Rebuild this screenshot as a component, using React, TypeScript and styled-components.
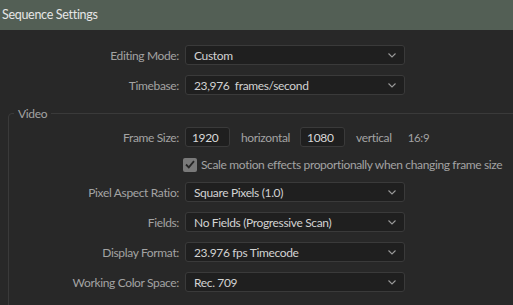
import React from "react";
import styled, { createGlobalStyle } from "styled-components";

const GlobalStyle = createGlobalStyle`
  html, body {
    margin: 0;
    padding: 0;
    background: #282828;
    overflow: hidden;
  }
  body {
    font-family: Lato, "Noto Sans", sans-serif;
    width: 513px;
    height: 305px;
  }
`;

const Window = styled.div`
  width: 513px;
  height: 305px;
  background: #282828;
  overflow: hidden;
`;

const TitleBar = styled.div`
  height: 30px;
  background: #535f55;
  display: flex;
  align-items: center;
  padding-left: 2px;
  color: #e6e6e6;
  font-size: 12.5px;
  letter-spacing: -0.3px;
  padding-bottom: 1px;
  box-sizing: border-box;
`;

const Grid = styled.div`
  display: grid;
  grid-template-columns: 179px 220px;
  column-gap: 6px;
  row-gap: 10px;
  align-items: center;
`;

const TopGrid = styled(Grid)`
  padding-top: 15px;
`;

const Text = styled.div`
  font-size: 12px;
  letter-spacing: -0.35px;
`;

const Label = styled(Text)`
  text-align: right;
  color: #a3a3a3;
`;

const SelectBox = styled(Text)`
  height: 20px;
  box-sizing: border-box;
  border: 1px solid #3a3a3a;
  border-radius: 3px;
  background: #1f1f1f;
  display: flex;
  align-items: center;
  justify-content: space-between;
  padding: 0 8px 0 8px;
  color: #d2d2d2;
  white-space: pre;
`;

const Chevron = () => (
  <svg width="8" height="5" viewBox="0 0 8 5">
    <path d="M0.5 0.5 L4 4 L7.5 0.5" fill="none" stroke="#9a9a9a" strokeWidth="1.1" />
  </svg>
);

const Select: React.FC<{ value: string }> = ({ value }) => (
  <SelectBox>
    <span>{value}</span>
    <Chevron />
  </SelectBox>
);

const Group = styled.fieldset`
  margin: 11px 0 0 8px;
  width: 600px;
  border: 1px solid #3a3a3a;
  border-radius: 4px;
  padding: 6px 0 20px 0;
  box-sizing: border-box;
`;

const Legend = styled.legend`
  color: #a3a3a3;
  font-size: 12px;
  letter-spacing: -0.35px;
  padding: 0 4px;
  margin-left: 5px;
`;

const VideoGrid = styled(Grid)`
  grid-template-columns: 170px 220px;
`;

const SizeRow = styled(Text)`
  display: flex;
  align-items: center;
  color: #a3a3a3;
  white-space: nowrap;
`;

const NumberInput = styled.div`
  flex: none;
  width: 45px;
  height: 20px;
  box-sizing: border-box;
  border: 1px solid #3a3a3a;
  border-radius: 3px;
  background: #1f1f1f;
  color: #d8d8d8;
  display: flex;
  align-items: center;
  padding-left: 6px;
`;

const Unit = styled.span<{ $gap: number }>`
  flex: none;
  margin: 0 ${(p) => p.$gap}px 0 11px;
`;

const Ratio = styled.span`
  color: #a3a3a3;
  font-size: 11.5px;
`;

const CheckRow = styled(Text)`
  display: flex;
  align-items: center;
  gap: 4px;
  margin-left: -2px;
  color: #a3a3a3;
  white-space: nowrap;
`;

const CheckBox = styled.div`
  width: 14px;
  height: 14px;
  flex: none;
  border-radius: 2px;
  background: #7a7a7a;
  display: flex;
  align-items: center;
  justify-content: center;
`;

const Spacer = styled.div``;

export default function App() {
  return (
    <Window>
      <GlobalStyle />
      <TitleBar>Sequence Settings</TitleBar>
      <TopGrid>
        <Label>Editing Mode:</Label>
        <Select value="Custom" />
        <Label>Timebase:</Label>
        <Select value="23,976  frames/second" />
      </TopGrid>
      <Group>
        <Legend>Video</Legend>
        <VideoGrid>
          <Label>Frame Size:</Label>
          <SizeRow>
            <NumberInput>1920</NumberInput>
            <Unit $gap={10}>horizontal</Unit>
            <NumberInput>1080</NumberInput>
            <Unit $gap={16}>vertical</Unit>
            <Ratio>16:9</Ratio>
          </SizeRow>
          <Spacer />
          <CheckRow>
            <CheckBox>
              <svg width="10" height="9" viewBox="0 0 10 9">
                <path d="M1 4.5 L3.8 7.3 L9 1.2" fill="none" stroke="#262626" strokeWidth="1.8" />
              </svg>
            </CheckBox>
            Scale motion effects proportionally when changing frame size
          </CheckRow>
          <Label>Pixel Aspect Ratio:</Label>
          <Select value="Square Pixels (1.0)" />
          <Label>Fields:</Label>
          <Select value="No Fields (Progressive Scan)" />
          <Label>Display Format:</Label>
          <Select value="23.976 fps Timecode" />
          <Label>Working Color Space:</Label>
          <Select value="Rec. 709" />
        </VideoGrid>
      </Group>
    </Window>
  );
}
